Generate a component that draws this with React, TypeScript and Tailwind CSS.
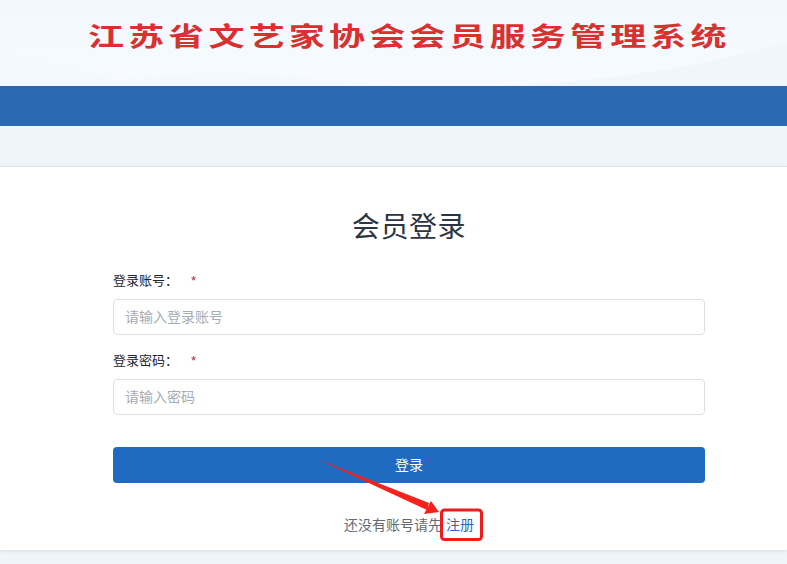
const cjk = "font-['Liberation_Sans','Noto_Sans_CJK_SC',sans-serif]";

function Field({ label, placeholder }: { label: string; placeholder: string }) {
  return (
    <div className="mb-[16px]">
      <div className="flex items-center h-[20px] mb-[8px] text-[13px] text-[#1f2329]">
        <span className="w-[78px]">{label}：</span>
        <span className="text-[#b0233f]">*</span>
      </div>
      <div className="h-[36px] flex items-center px-[11px] rounded-[4px] border border-[#dddfe3] bg-white text-[14px] text-[#a8abb2]">
        {placeholder}
      </div>
    </div>
  );
}

export default function App() {
  return (
    <div className={`relative h-[564px] w-[787px] overflow-hidden bg-[#f0f5fa] ${cjk}`}>
      <header className="relative h-[86px] overflow-hidden bg-gradient-to-b from-[#f2f8fe] to-[#f7fbff] pl-[88px] pt-[17px]">
        <svg className="absolute inset-0" width="787" height="86" viewBox="0 0 787 86">
          <path d="M0 50 C60 66 100 76 160 86 L0 86Z" fill="#f3f9fd" />
          <path d="M100 80 C200 70 280 72 400 86 L100 86Z" fill="#f4f9fd" />
          <path d="M485 86 C560 86 700 70 787 42 L787 86Z" fill="#eff7fc" />
        </svg>
        <h1 className="relative w-[464px] origin-left scale-x-[1.385] whitespace-nowrap text-[26px] font-bold leading-[40px] tracking-[3px] text-[#d8312f]">
          江苏省文艺家协会会员服务管理系统
        </h1>
      </header>
      <nav className="h-[40px] bg-[#2b69b3]" />
      <div className="h-[41px] border-b border-[#e3e6ea] bg-[#f0f5fa]" />
      <main className="flex h-[383px] flex-col bg-white px-[113px] pr-[82px] pt-[39px] shadow-[0_1px_4px_rgba(0,0,0,0.1)]">
        <h2 className="mb-[21px] text-center text-[28px] leading-[44px] tracking-[0.6px] text-[#2c3542]">会员登录</h2>
        <Field label="登录账号" placeholder="请输入登录账号" />
        <Field label="登录密码" placeholder="请输入密码" />
        <button className="mt-[16px] h-[36px] rounded-[4px] bg-[#1f6bc1] text-[14px] text-white">登录</button>
        <p className="mt-[32px] text-center text-[14px] leading-[20px] text-[#606a78]">
          还没有账号请先 <span className="text-[#1f6bc1]">注册</span>
        </p>
      </main>
      {/* annotation drawn over the screenshot */}
      <svg className="absolute left-0 top-0" width="787" height="564" viewBox="0 0 787 564">
        <path d="M317 459 L429 503 L427 510 Z" fill="#f5211a" />
        <path d="M439 512 L431 501 L424 514 Z" fill="#f5211a" />
        <rect x="441.5" y="510" width="40" height="29.5" rx="3" fill="none" stroke="#ee1c1c" strokeWidth="3" />
      </svg>
    </div>
  );
}
